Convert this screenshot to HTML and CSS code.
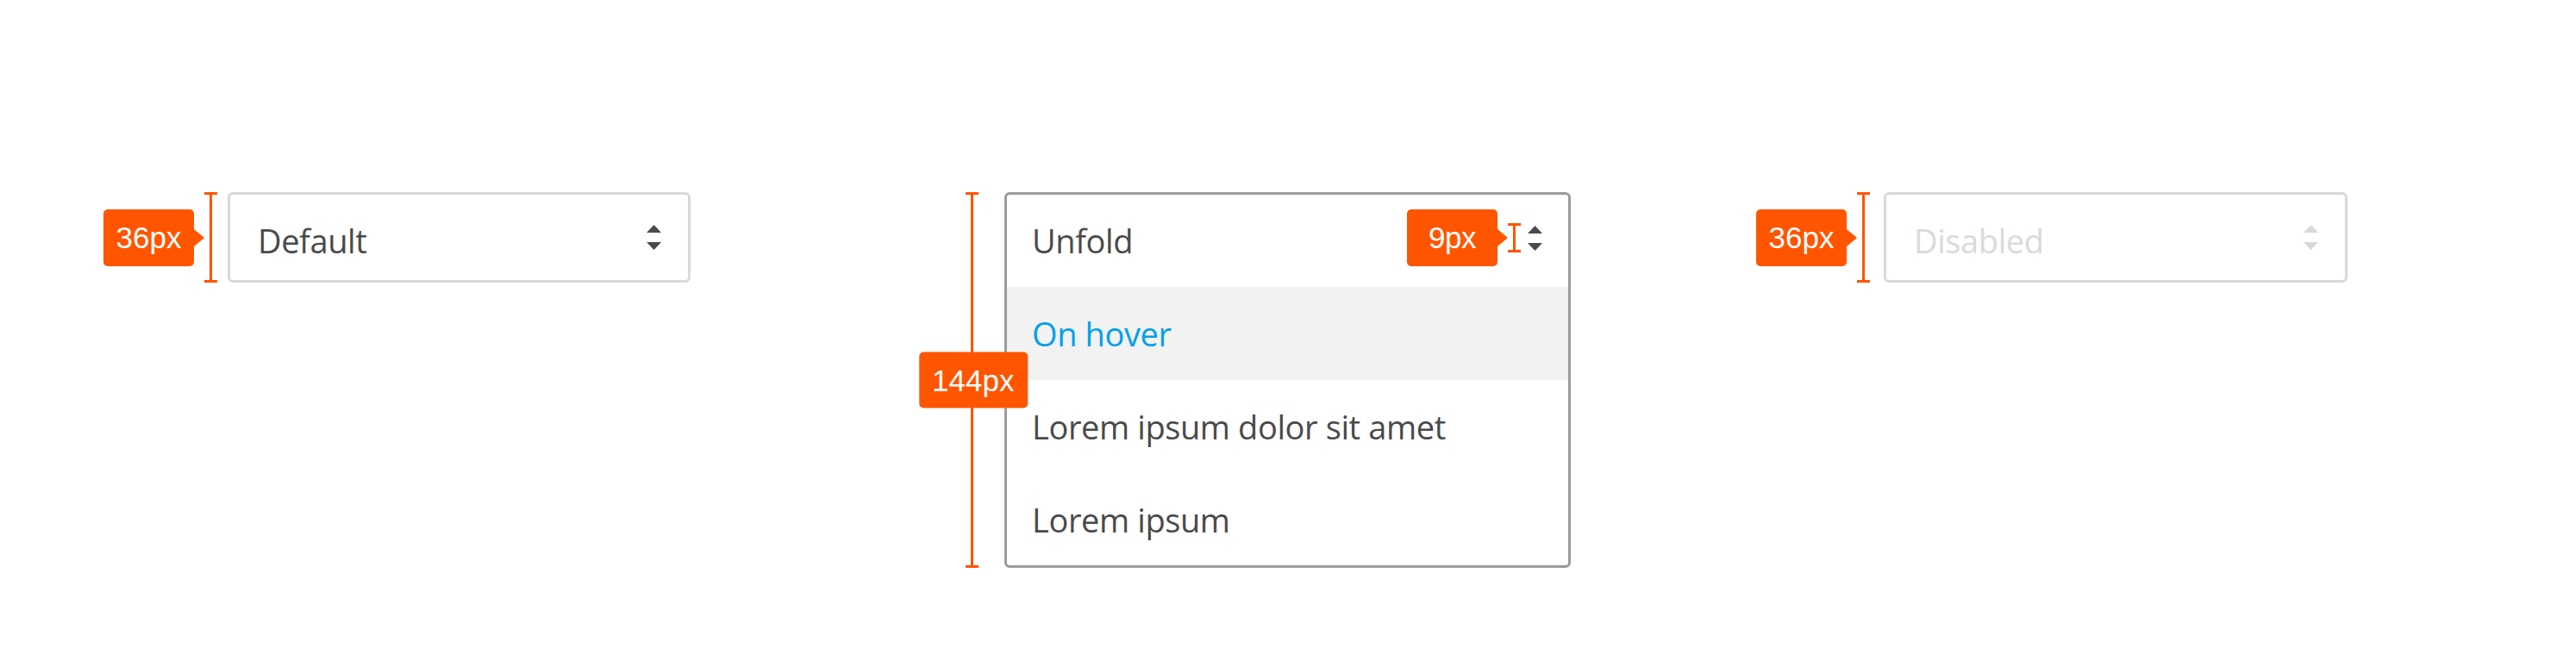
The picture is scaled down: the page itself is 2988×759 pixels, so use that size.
FILE: index.html
```html
<!DOCTYPE html>
<html lang="en">
<head>
<meta charset="utf-8">
<title>Select states</title>
<link rel="stylesheet" href="styles.css">
</head>
<body>
<div class="stage">
  <div class="spec spec-default">
    <div class="tag tag-point">36px</div>
    <div class="ruler"></div>
    <div class="select">
      <div class="select-head">
        <span class="select-text">Default</span>
        <svg class="caret" viewBox="0 0 17 29" width="17" height="29"><path d="M8.5 0L17 9H0Z M0 20H17L8.5 29Z"/></svg>
      </div>
    </div>
  </div>

  <div class="spec spec-unfold">
    <div class="ruler ruler-tall"><div class="tag tag-float">144px</div></div>
    <div class="select select-open">
      <div class="select-head select-head-open">
        <span class="select-text">Unfold</span>
        <div class="mini">
          <div class="tag tag-point">9px</div>
          <div class="ruler ruler-mini"></div>
        </div>
        <svg class="caret" viewBox="0 0 17 29" width="17" height="29"><path d="M8.5 0L17 9H0Z M0 20H17L8.5 29Z"/></svg>
      </div>
      <ul class="options">
        <li class="option option-hover">On hover</li>
        <li class="option">Lorem ipsum dolor sit amet</li>
        <li class="option">Lorem ipsum</li>
      </ul>
    </div>
  </div>

  <div class="spec spec-disabled">
    <div class="tag tag-point">36px</div>
    <div class="ruler"></div>
    <div class="select select-disabled">
      <div class="select-head">
        <span class="select-text">Disabled</span>
        <svg class="caret" viewBox="0 0 17 29" width="17" height="29"><path d="M8.5 0L17 9H0Z M0 20H17L8.5 29Z"/></svg>
      </div>
    </div>
  </div>
</div>
</body>
</html>
```

FILE: styles.css
```css
html, body {
  margin: 0;
  padding: 0;
  background: #ffffff;
}

body {
  width: 2988px;
  height: 759px;
  overflow: hidden;
  font-family: "Open Sans", "Noto Sans", sans-serif;
}

.stage {
  display: flex;
  align-items: flex-start;
  padding: 223px 0 0 120px;
}

.spec {
  display: flex;
  align-items: center;
}

.spec-unfold {
  margin-left: 319px;
}

.spec-disabled {
  margin-left: 215px;
}

/* orange annotation tag */
.tag {
  position: relative;
  box-sizing: border-box;
  width: 105px;
  height: 66px;
  padding: 0 12px;
  display: flex;
  align-items: center;
  justify-content: center;
  background: #ff5500;
  color: #ffffff;
  border-radius: 5px;
  font-family: "Liberation Sans", Arial, sans-serif;
  font-size: 35px;
  line-height: 66px;
  white-space: nowrap;
}

.tag-point {
  margin-right: 12px;
}

.tag-point::after {
  content: "";
  position: absolute;
  left: 100%;
  top: 50%;
  margin-top: -10px;
  border-left: 12px solid #ff5500;
  border-top: 10px solid transparent;
  border-bottom: 10px solid transparent;
}

.tag-float {
  position: absolute;
  left: 50%;
  top: 50%;
  width: 126px;
  transform: translate(-49%, -50%);
  height: 65px;
  z-index: 2;
}

/* measuring ruler */
.ruler {
  position: relative;
  box-sizing: border-box;
  width: 15px;
  align-self: stretch;
  border-top: 3px solid #ff5500;
  border-bottom: 3px solid #ff5500;
  background: linear-gradient(#ff5500, #ff5500) center / 3px 100% no-repeat;
  margin-right: 12px;
}

.ruler-tall {
  margin-right: 30px;
}

.spec-disabled .ruler {
  margin-right: 16px;
}

.ruler-mini {
  align-self: center;
  height: 34px;
  margin-right: 8px;
}

/* select box */
.select {
  box-sizing: border-box;
  width: 537px;
  border: 3px solid #d9d9d9;
  border-radius: 6px;
  background: #ffffff;
  color: #4a4a4a;
  font-size: 38px;
  letter-spacing: -0.4px;
}

.select-open {
  width: 657px;
  border-color: #9b9b9b;
}

.select-disabled {
  width: 538px;
  color: #dadada;
}

.select-head {
  display: flex;
  align-items: center;
  height: 99px;
  padding: 0 31px 0 32px;
}

.select-head-open {
  height: 100px;
  padding-bottom: 7px;
  padding-left: 29px;
  padding-right: 30px;
}

.select-text {
  flex: 1;
  padding-top: 6px;
  line-height: 52px;
  white-space: nowrap;
}

.mini {
  display: flex;
  align-items: center;
  height: 66px;
}

.caret {
  display: block;
  flex: none;
  fill: #4a4a4a;
}

.select-disabled .caret {
  fill: #d9d9d9;
}

/* options */
.options {
  list-style: none;
  margin: 0;
  padding: 0;
}

.option {
  display: flex;
  align-items: center;
  height: 108px;
  padding: 0 29px;
  line-height: 52px;
  white-space: nowrap;
}

.option:last-child {
  height: 107px;
}

.option-hover {
  background: #f2f2f2;
  color: #00a0e9;
}
```
